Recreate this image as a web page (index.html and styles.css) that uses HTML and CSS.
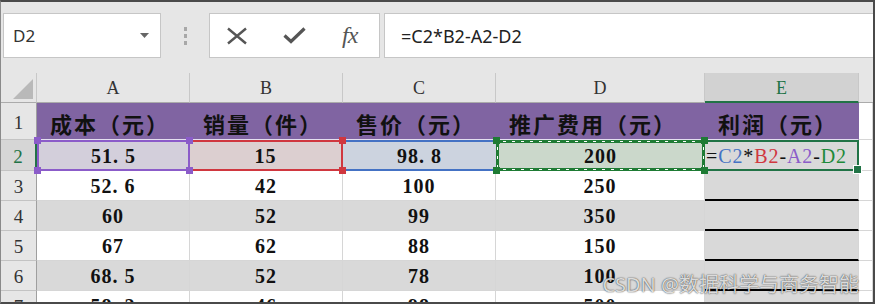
FILE: index.html
```html
<!DOCTYPE html>
<html lang="zh-CN">
<head>
<meta charset="utf-8">
<title>Excel 公式</title>
<link rel="stylesheet" href="styles.css">
</head>
<body>
<div class="app">
  <div class="toolbar">
    <div class="namebox">
      <span class="ref">D2</span>
      <svg class="arrow" width="9" height="5" viewBox="0 0 9 5"><path d="M0 0 H9 L4.5 5 Z" fill="#666"/></svg>
    </div>
    <div class="grip"><i></i><i></i><i></i></div>
    <div class="btns">
      <svg class="x" width="22" height="18" viewBox="0 0 22 18"><path d="M2 1.5 L20 16.5 M20 1.5 L2 16.5" stroke="#555" stroke-width="2.4" fill="none"/></svg>
      <svg class="ok" width="23" height="17" viewBox="0 0 23 17"><path d="M1.5 8.5 L8 14.5 L21.5 1.5" stroke="#555" stroke-width="3.2" fill="none"/></svg>
      <span class="fx">fx</span>
    </div>
    <div class="formula">=C2*B2-A2-D2</div>
  </div>

  <div class="sheet">
    <div class="corner"><span class="tri"></span></div>
    <div class="ch">A</div>
    <div class="ch">B</div>
    <div class="ch">C</div>
    <div class="ch">D</div>
    <div class="ch sel">E</div>
    <div class="ch last"></div>

    <div class="rh">1</div>
    <div class="c hd">成本（元）</div>
    <div class="c hd">销量（件）</div>
    <div class="c hd">售价（元）</div>
    <div class="c hd">推广费用（元）</div>
    <div class="c hd">利润（元）</div>
    <div class="c"></div>

    <div class="rh act">2</div>
    <div class="c ra">51<span class="dot">.</span>5</div>
    <div class="c rb">15</div>
    <div class="c rc">98<span class="dot">.</span>8</div>
    <div class="c rd">200</div>
    <div class="c re"><span class="f">=<span class="kc">C2</span>*<span class="kb">B2</span>-<span class="ka">A2</span>-<span class="kd">D2</span></span></div>
    <div class="c"></div>

    <div class="rh">3</div>
    <div class="c">52<span class="dot">.</span>6</div>
    <div class="c">42</div>
    <div class="c">100</div>
    <div class="c">250</div>
    <div class="c e"></div>
    <div class="c"></div>

    <div class="rh">4</div>
    <div class="c g">60</div>
    <div class="c g">52</div>
    <div class="c g">99</div>
    <div class="c g">350</div>
    <div class="c e"></div>
    <div class="c"></div>

    <div class="rh">5</div>
    <div class="c">67</div>
    <div class="c">62</div>
    <div class="c">88</div>
    <div class="c">150</div>
    <div class="c e"></div>
    <div class="c"></div>

    <div class="rh">6</div>
    <div class="c g">68<span class="dot">.</span>5</div>
    <div class="c g">52</div>
    <div class="c g">78</div>
    <div class="c g">100</div>
    <div class="c e"></div>
    <div class="c"></div>

    <div class="rh">7</div>
    <div class="c">58<span class="dot">.</span>2</div>
    <div class="c">46</div>
    <div class="c">98</div>
    <div class="c">500</div>
    <div class="c e"></div>
    <div class="c"></div>
  </div>

  <div class="wm">CSDN @数据科学与商务智能</div>
</div>
</body>
</html>
```

FILE: styles.css
```css
* { box-sizing: border-box; }
html, body { margin: 0; padding: 0; background: #fff; }

.app {
  position: relative;
  width: 875px;
  height: 304px;
  overflow: hidden;
  border-top: 2px solid #4a4a4a;
  border-right: 2px solid #4a4a4a;
  border-bottom: 2px solid #4a4a4a;
  border-left: 1px solid #8a8a8a;
  background: #fff;
}

/* ---------- toolbar ---------- */
.toolbar {
  height: 71px;
  padding-top: 11px;
  background: #e6e6e6;
  display: flex;
  align-items: flex-start;
}
.namebox, .btns, .formula {
  height: 45px;
  background: #fff;
  border: 1px solid #c6c6c6;
  display: flex;
  align-items: center;
}
.namebox {
  margin-left: 2px;
  width: 158px;
  padding: 0 11px 0 9px;
  justify-content: space-between;
}
.ref {
  font-family: "Noto Sans", "Open Sans", sans-serif;
  font-size: 17px;
  color: #333;
}
.grip {
  width: 48px;
  height: 45px;
  display: flex;
  flex-direction: column;
  align-items: center;
  justify-content: center;
  gap: 3px;
}
.grip i {
  display: block;
  width: 3px;
  height: 4px;
  background: #a8a8a8;
}
.btns {
  width: 171px;
  padding-left: 16px;
}
.btns .ok { margin-left: 35px; }
.fx {
  margin-left: 36px;
  font-family: "Liberation Serif", serif;
  font-style: italic;
  font-size: 24px;
  color: #555;
  letter-spacing: -1px;
}
.formula {
  flex: 1;
  margin-left: 4px;
  border-right: none;
  padding-left: 16px;
  font-family: "Noto Sans", "Open Sans", sans-serif;
  font-size: 18px;
  color: #222;
}

/* ---------- sheet ---------- */
.sheet {
  display: grid;
  grid-template-columns: 36px 153px 153px 153px 209px 154px 1fr;
  grid-template-rows: 30px 37px 31px 30px 30px 30px 30px 30px;
  font-family: "Liberation Serif", "Noto Sans CJK SC", serif;
}
.corner {
  position: relative;
  background: #e6e6e6;
  border-right: 1px solid #c8c8c8;
  border-bottom: 1px solid #ababab;
}
.tri {
  position: absolute;
  right: 3px;
  bottom: 3px;
  width: 0;
  height: 0;
  border-left: 20px solid transparent;
  border-bottom: 20px solid #b9b9b9;
}
.ch {
  background: #e6e6e6;
  border-bottom: 1px solid #ababab;
  border-right: 1px solid #c8c8c8;
  display: flex;
  align-items: center;
  justify-content: center;
  font-size: 18px;
  color: #333;
  padding-top: 2px;
}
.ch.sel {
  background: #d2d2d2;
  color: #217346;
  border-bottom: 2px solid #217346;
}
.ch.last { border-right: none; }

.rh {
  background: #e6e6e6;
  border-right: 1px solid #9f9f9f;
  border-bottom: 1px solid #c3c3c3;
  display: flex;
  align-items: center;
  justify-content: center;
  font-size: 19px;
  color: #333;
  padding-top: 3px;
}
.rh.act {
  background: #d6d6d6;
  color: #217346;
  border-right: 2px solid #217346;
}

.c {
  position: relative;
  border-right: 1px solid #d6d6d6;
  border-bottom: 1px solid #d6d6d6;
  display: flex;
  align-items: center;
  justify-content: center;
  font-weight: bold;
  font-size: 20px;
  color: #111;
  letter-spacing: 1px;
  padding-top: 1px;
}
.dot { margin-right: 6px; }
.c.g { background: #d9d9d9; }
.c.e {
  background: #d9d9d9;
  border-bottom: 2px solid #000;
}
.c.hd {
  background: #8064a2;
  border-right-color: #8064a2;
  border-bottom-color: #e4dff0;
  font-family: "Noto Sans CJK SC", sans-serif;
  font-size: 22px;
  font-weight: bold;
  letter-spacing: 2px;
  color: #111;
  padding-top: 4px;
  justify-content: flex-start;
  padding-left: 13px;
}

/* selected range references in row 2 */
.c.ra {
  background: #d3cfdb;
  border: 2px solid #8b5cc9;
}
.c.rb {
  background: #dccfd0;
  border: 2px solid #d0373f;
  border-left: none;
}
.c.rc {
  background: #ccd3df;
  border: 2px solid #4472c4;
  border-left: none;
  border-right: none;
}
.c.rd {
  background: #cbd8cb;
  border: 3px solid #1e7b34;
}
.c.re {
  background: #d9d9d9;
  border: 2px solid #217346;
  border-left: none;
  justify-content: flex-start;
  padding-left: 1px;
  font-weight: normal;
  font-size: 20px;
  letter-spacing: 0.9px;
  overflow: visible;
  z-index: 2;
}
.f { white-space: nowrap; color: #111; }
.kc { color: #4472c4; }
.kb { color: #d0373f; }
.ka { color: #8b5cc9; }
.kd { color: #1e8a3a; }

/* corner handles */
.c.ra::after, .c.rb::after, .c.rd::before, .c.re::after {
  content: "";
  position: absolute;
  pointer-events: none;
  z-index: 3;
}
.c.ra::after {
  inset: -5px;
  background:
    linear-gradient(#8b5cc9, #8b5cc9) left top / 7px 7px no-repeat,
    linear-gradient(#8b5cc9, #8b5cc9) right top / 7px 7px no-repeat,
    linear-gradient(#8b5cc9, #8b5cc9) left bottom / 7px 7px no-repeat,
    linear-gradient(#8b5cc9, #8b5cc9) right bottom / 7px 7px no-repeat;
}
.c.rb::after {
  inset: -5px -5px -5px 0;
  background:
    linear-gradient(#d0373f, #d0373f) right top / 7px 7px no-repeat,
    linear-gradient(#d0373f, #d0373f) right bottom / 7px 7px no-repeat;
}
.c.rd::after {
  content: "";
  position: absolute;
  inset: -2px;
  pointer-events: none;
  z-index: 3;
  background:
    repeating-linear-gradient(90deg, transparent 0 6px, #fff 6px 9px) left top / 100% 1px no-repeat,
    repeating-linear-gradient(90deg, transparent 0 6px, #fff 6px 9px) left bottom / 100% 1px no-repeat,
    repeating-linear-gradient(180deg, transparent 0 6px, #fff 6px 9px) left top / 1px 100% no-repeat,
    repeating-linear-gradient(180deg, transparent 0 6px, #fff 6px 9px) right top / 1px 100% no-repeat;
}
.c.rd::before {
  inset: -6px;
  z-index: 4;
  background:
    linear-gradient(#1e7b34, #1e7b34) left top / 7px 7px no-repeat,
    linear-gradient(#1e7b34, #1e7b34) right top / 7px 7px no-repeat,
    linear-gradient(#1e7b34, #1e7b34) left bottom / 7px 7px no-repeat,
    linear-gradient(#1e7b34, #1e7b34) right bottom / 7px 7px no-repeat;
}
.c.re::after {
  right: -5px;
  bottom: -5px;
  width: 7px;
  height: 7px;
  background: #217346;
  border: 1px solid #fff;
}

/* watermark */
.wm {
  position: absolute;
  right: 14px;
  bottom: 4px;
  font-family: "Noto Sans", "Noto Sans CJK SC", sans-serif;
  font-size: 20px;
  color: rgba(255, 255, 255, 0.82);
  text-shadow: 0 0 1px rgba(0,0,0,0.7), 0 0 2px rgba(0,0,0,0.4);
  white-space: nowrap;
  z-index: 5;
}
```
